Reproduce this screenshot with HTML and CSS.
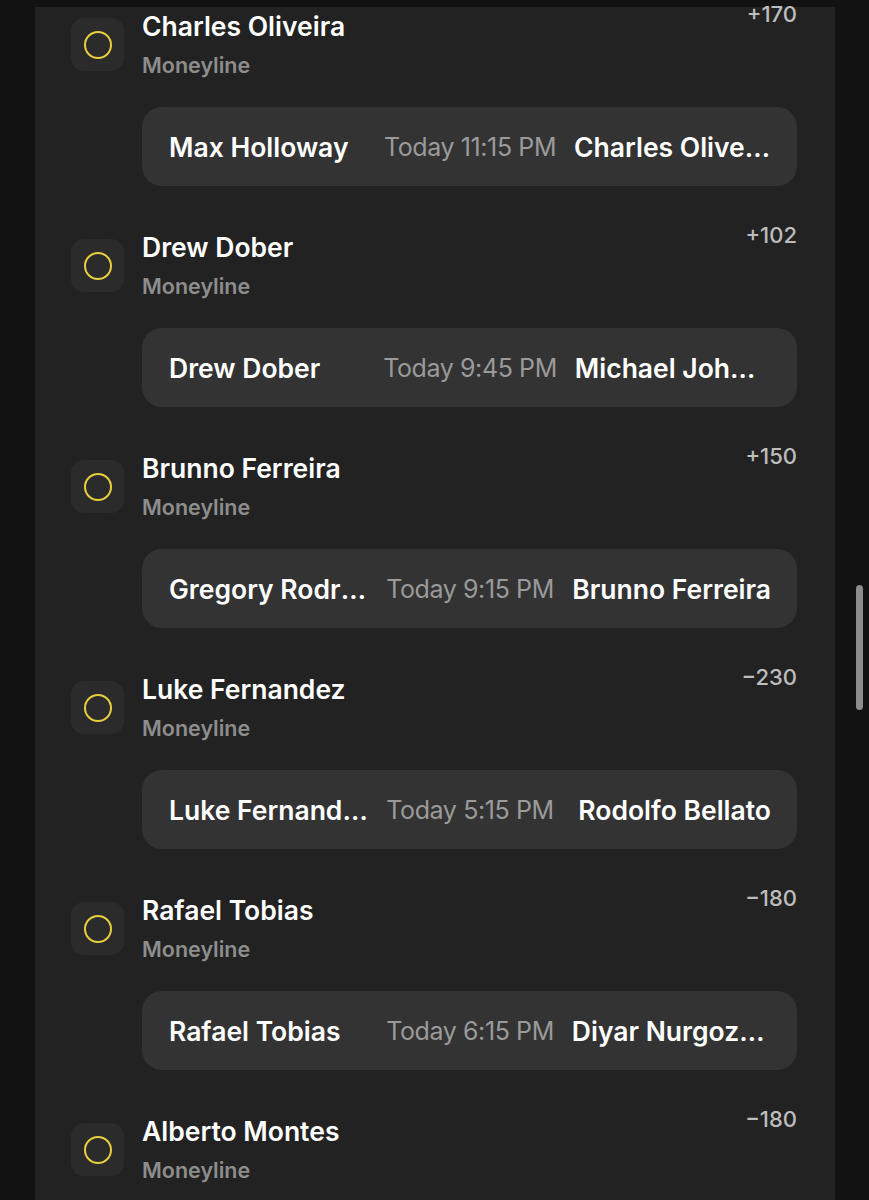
FILE: index.html
```html
<!DOCTYPE html>
<html lang="en">
<head>
    <meta charset="UTF-8">
    <meta name="viewport" content="width=device-width, initial-scale=1.0">
    <title>Picks</title>
    <link rel="stylesheet" href="styles.css">
</head>
<body>
    <div class="panel">
        <div class="pick">
            <div class="pick-head">
                <div class="pick-icon"><span class="ring"></span></div>
                <div class="pick-text">
                    <div class="pick-name">Charles Oliveira</div>
                    <div class="pick-market">Moneyline</div>
                </div>
                <div class="pick-odds">+170</div>
            </div>
            <div class="matchup">
                <div class="fighter">Max Holloway</div>
                <div class="match-time">Today 11:15 PM</div>
                <div class="fighter right">Charles Oliveira</div>
            </div>
        </div>

        <div class="pick">
            <div class="pick-head">
                <div class="pick-icon"><span class="ring"></span></div>
                <div class="pick-text">
                    <div class="pick-name">Drew Dober</div>
                    <div class="pick-market">Moneyline</div>
                </div>
                <div class="pick-odds">+102</div>
            </div>
            <div class="matchup">
                <div class="fighter">Drew Dober</div>
                <div class="match-time">Today 9:45 PM</div>
                <div class="fighter right">Michael Johnson</div>
            </div>
        </div>

        <div class="pick">
            <div class="pick-head">
                <div class="pick-icon"><span class="ring"></span></div>
                <div class="pick-text">
                    <div class="pick-name">Brunno Ferreira</div>
                    <div class="pick-market">Moneyline</div>
                </div>
                <div class="pick-odds">+150</div>
            </div>
            <div class="matchup">
                <div class="fighter">Gregory Rodrigues</div>
                <div class="match-time">Today 9:15 PM</div>
                <div class="fighter right">Brunno Ferreira</div>
            </div>
        </div>

        <div class="pick">
            <div class="pick-head">
                <div class="pick-icon"><span class="ring"></span></div>
                <div class="pick-text">
                    <div class="pick-name">Luke Fernandez</div>
                    <div class="pick-market">Moneyline</div>
                </div>
                <div class="pick-odds">&minus;230</div>
            </div>
            <div class="matchup">
                <div class="fighter">Luke Fernandez</div>
                <div class="match-time">Today 5:15 PM</div>
                <div class="fighter right">Rodolfo Bellato</div>
            </div>
        </div>

        <div class="pick">
            <div class="pick-head">
                <div class="pick-icon"><span class="ring"></span></div>
                <div class="pick-text">
                    <div class="pick-name">Rafael Tobias</div>
                    <div class="pick-market">Moneyline</div>
                </div>
                <div class="pick-odds">&minus;180</div>
            </div>
            <div class="matchup">
                <div class="fighter">Rafael Tobias</div>
                <div class="match-time">Today 6:15 PM</div>
                <div class="fighter right">Diyar Nurgozhay</div>
            </div>
        </div>

        <div class="pick">
            <div class="pick-head">
                <div class="pick-icon"><span class="ring"></span></div>
                <div class="pick-text">
                    <div class="pick-name">Alberto Montes</div>
                    <div class="pick-market">Moneyline</div>
                </div>
                <div class="pick-odds">&minus;180</div>
            </div>
        </div>
    </div>

    <div class="scroll-thumb"></div>
</body>
</html>
```

FILE: styles.css
```css
body {
    margin: 0;
    background-color: #121212;
    font-family: Inter, "Noto Sans", sans-serif;
    color: #fff;
    overflow: hidden;
}

.panel {
    margin: 7px 0 0 35px;
    width: 800px;
    min-height: 1200px;
    box-sizing: border-box;
    padding: 3px 38px 0 36px;
    background-color: #222;
}

.pick {
    margin-bottom: 45px;
}

.pick-head {
    display: flex;
    align-items: flex-start;
}

.pick-icon {
    width: 53px;
    height: 53px;
    margin-top: 8px;
    margin-right: 18px;
    border-radius: 13px;
    background-color: #2b2b2b;
    display: flex;
    align-items: center;
    justify-content: center;
    flex-shrink: 0;
}

.ring {
    width: 24px;
    height: 24px;
    border: 2.5px solid #e7cf3e;
    border-radius: 50%;
}

.pick-text {
    flex: 1;
}

.pick-name {
    font-size: 26.5px;
    line-height: 32px;
    font-weight: 600;
}

.pick-market {
    margin-top: 10px;
    font-size: 21.5px;
    line-height: 26px;
    font-weight: 600;
    color: #8d8d8d;
}

.pick-odds {
    margin-top: -8px;
    font-size: 22px;
    line-height: 24px;
    font-weight: 500;
    color: #bdbdbd;
}

.matchup {
    margin: 29px 0 0 71px;
    height: 79px;
    box-sizing: border-box;
    padding: 0 26px 0 27px;
    border-radius: 20px;
    background-color: #333;
    display: grid;
    grid-template-columns: 1fr auto 1fr;
    column-gap: 18px;
    align-items: center;
}

.fighter {
    font-size: 26.5px;
    font-weight: 600;
    white-space: nowrap;
    overflow: hidden;
    text-overflow: ellipsis;
}

.fighter.right {
    text-align: right;
}

.match-time {
    font-size: 25px;
    font-weight: 400;
    color: #9a9a9a;
    letter-spacing: -0.4px;
}

.scroll-thumb {
    position: absolute;
    left: 856px;
    top: 585px;
    width: 7px;
    height: 125px;
    border-radius: 4px;
    background-color: #8c8c8c;
}
```
